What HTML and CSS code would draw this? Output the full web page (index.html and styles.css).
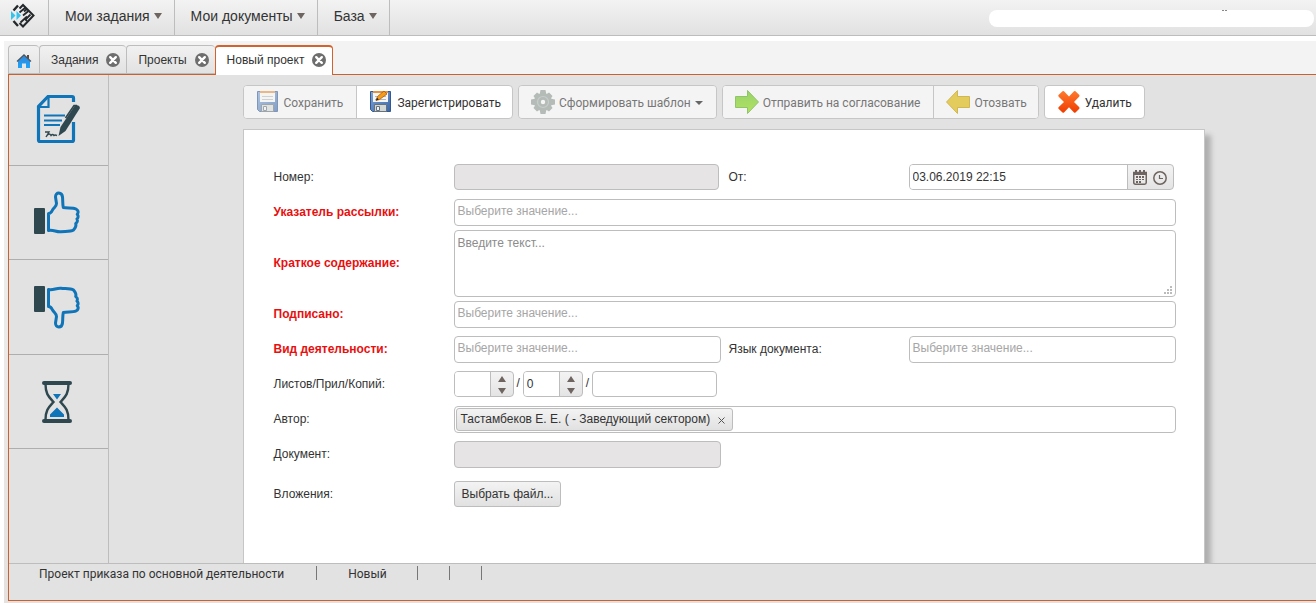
FILE: index.html
```html
<!DOCTYPE html>
<html lang="ru">
<head>
<meta charset="utf-8">
<title>Новый проект</title>
<link rel="stylesheet" href="styles.css">
</head>
<body>
<svg class="defs" aria-hidden="true">
  <defs>
    <linearGradient id="gBlue" x1="0" y1="0" x2="1" y2="1"><stop offset="0" stop-color="#7ea6d6"/><stop offset="1" stop-color="#3a66a8"/></linearGradient>
    <linearGradient id="gRed" x1="0" y1="0" x2="0" y2="1"><stop offset="0" stop-color="#ff7a2e"/><stop offset="1" stop-color="#ee3d00"/></linearGradient>
    <linearGradient id="gGreen" x1="0" y1="0" x2="0" y2="1"><stop offset="0" stop-color="#97d36c"/><stop offset="1" stop-color="#b2e25f"/></linearGradient>
    <linearGradient id="gHome" x1="0" y1="0" x2="0" y2="1"><stop offset="0" stop-color="#2f86dc"/><stop offset="1" stop-color="#1fa4f8"/></linearGradient>
    <symbol id="close" viewBox="0 0 14 14">
      <circle cx="7" cy="7" r="7" fill="#6e6e6e"/>
      <path d="M4.2 4.2l5.6 5.6M9.8 4.2l-5.6 5.6" stroke="#fff" stroke-width="2.4" stroke-linecap="round"/>
    </symbol>
    <symbol id="floppy" viewBox="0 0 24 24">
      <path d="M1.500 1.500h20v20h-18l-2-2z" fill="url(#gBlue)" stroke="#35598f"/>
      <path d="M4 1h15v11H4z" fill="#f5f5f3"/>
      <path d="M4 1h15v2H4z" fill="#e79040"/>
      <path d="M6 6.500h11M6 9.500h11" stroke="#b5b9bd"/>
      <path d="M5.500 14.500h12v7h-12z" fill="#d4d8d4" stroke="#66737e"/>
      <path d="M7.500 16.500h3v4h-3z" fill="#f3f3f3" stroke="#66737e"/>
    </symbol>
    <symbol id="thumb" viewBox="0 0 48 44">
      <path d="M2 18h9v24H2z" fill="#2f474f" stroke="#2f474f" stroke-width="2" stroke-linejoin="round"/>
      <path d="M15.500 39.500V22.500q2.500 0 4-3.500c1.500-2.500 4-3.500 4-6.500L22.500 6c0-5.500 6.500-5 7 0 .4 3.500 0 7 .8 10.500 4 1 9.500-.2 12.700 1.500 2.200 1.200 3 3.500 1.200 5.300 1.600 1.500 1 3.700-.3 4.700 1.200 1.700.2 3.700-1.200 4.500.8 2.300-.4 4.500-2.200 6.500-3 2-9 1.200-12.500 1.800-5 .4-7.500-2.300-12.500-1.300z" fill="none" stroke="#0f75b8" stroke-width="3" stroke-linejoin="round"/>
    </symbol>
  </defs>
</svg>

<header class="topbar">
  <a class="logo" href="#" aria-label="Главная">
    <svg width="26" height="26" viewBox="0 0 26 26">
      <path d="M3.500 7.500L8 2.500M3.500 18l4.500 5" stroke="#24282b" stroke-width="2.400" fill="none"/>
      <path d="M9.500 5.500l3.500-3.500L23.500 12.500 13 23.500l-3.500-3.500" stroke="#24282b" stroke-width="2" fill="none"/>
      <path d="M9.500 9.500l6-5M14 8.500l3-2.500M13 12.500l5.500-4.500M20.500 11.500l-5 5 1.500 1.500M10.500 19.500l6.500-6" stroke="#24282b" stroke-width="1.800" fill="none"/>
      <path d="M1 8l4.500 4.500L1 17zM6.500 8l4.500 4.500-4.500 4.500z" fill="#35c3ec"/>
    </svg>
  </a>
  <nav class="menu">
    <button type="button">Мои задания<i class="arrow"></i></button>
    <button type="button">Мои документы<i class="arrow"></i></button>
    <button type="button">База<i class="arrow"></i></button>
  </nav>
  <div class="user"><i class="dots"></i></div>
</header>

<div class="app">
  <nav class="tabs">
    <a class="tab home" href="#" aria-label="Домой">
      <svg width="16" height="16" viewBox="0 0 16 16"><path d="M11 2h2v4h-2z" fill="#5c4a42"/><path d="M2 8l6-5.500L14 8v7h-4v-4.500H6V15H2z" fill="url(#gHome)"/><path d="M1 8.500l7-6.500 7 6.500" stroke="#4c555e" stroke-width="1.300" fill="none"/></svg>
    </a>
    <div class="tab"><a href="#">Задания</a><button type="button" aria-label="Закрыть"><svg width="14" height="14"><use href="#close"/></svg></button></div>
    <div class="tab"><a href="#">Проекты</a><button type="button" aria-label="Закрыть"><svg width="14" height="14"><use href="#close"/></svg></button></div>
    <div class="tab active"><a href="#">Новый проект</a><button type="button" aria-label="Закрыть"><svg width="14" height="14"><use href="#close"/></svg></button></div>
  </nav>

  <div class="panel">
    <div class="workspace">
      <aside class="sidebar">
        <button type="button" aria-label="Подписать">
          <svg width="48" height="50" viewBox="0 0 48 50">
            <path d="M39.500 8V4q0-1.500-1.500-1.500H14L4.500 12.500V46q0 1.500 1.500 1.500h32q1.500 0 1.500-1.500V28" fill="none" stroke="#0f75b8" stroke-width="3.200"/>
            <path d="M14.500 3v10H4.500" fill="none" stroke="#0f75b8" stroke-width="2.200"/>
            <path d="M10 21.500h21M10 26.500h18M10 31h16" stroke="#0f75b8" stroke-width="2.200"/>
            <path d="M11 38h4l-3 5q3-5 5-1.500 1.500-2 3 0 1-1 3 0" fill="none" stroke="#2f474f" stroke-width="1.400"/>
            <path d="M24.500 42l2-9L40.500 12q5-2 5.500 2L31.500 37z" fill="#2f474f"/>
            <path d="M31.500 24L40 11.500l3 0" fill="none" stroke="#2f474f" stroke-width="1.600"/>
          </svg>
        </button>
        <button type="button" aria-label="Согласовать"><svg width="48" height="44"><use href="#thumb"/></svg></button>
        <button type="button" aria-label="Отклонить"><svg class="flip" width="48" height="44"><use href="#thumb"/></svg></button>
        <button type="button" aria-label="Ожидание">
          <svg width="48" height="44" viewBox="0 0 48 44">
            <path d="M11 3h26M11 41h26" stroke="#2f474f" stroke-width="4" stroke-linecap="round"/>
            <path d="M12.500 4c0 10 3 12.500 8 18-5 5.500-8 8-8 18M35.500 4c0 10-3 12.500-8 18 5 5.500 8 8 8 18" fill="none" stroke="#2f474f" stroke-width="2.400"/>
            <path d="M20 14h8l-4 5.500zM17 37l0-2.500 7-7 7 7V37z" fill="#0f75b8"/>
          </svg>
        </button>
      </aside>

      <main class="main">
        <div class="sheet">
          <div class="toolbar">
            <div class="group">
              <button type="button" disabled><svg width="24" height="24"><use href="#floppy"/></svg>Сохранить</button>
              <button type="button"><svg width="24" height="24" viewBox="0 0 24 24"><use href="#floppy"/><path d="M7 10.500l1.500-4L15 1l3 3-7.500 5.500z" fill="#f59c1a" stroke="#a85c0c" stroke-width=".8"/><path d="M7 10.500l1-2.700 1.800 1.600z" fill="#222"/></svg>Зарегистрировать</button>
            </div>
            <div class="group">
              <button type="button" disabled><svg width="24" height="24" viewBox="0 0 24 24"><g fill="#8a9690"><circle cx="12" cy="12" r="9"/><path d="M9.500 0h5l1 5h-7zM8.500 19h7l-1 5h-5zM0 9.500l5-1v7l-5-1zM24 9.500l-5-1v7l5-1z"/><path d="M9.500 1h5l1 5h-7zM8.500 18h7l-1 5h-5zM1 9.500l5-1v7l-5-1zM23 9.500l-5-1v7l5-1z" transform="rotate(45 12 12)"/></g><circle cx="12" cy="12" r="5.500" fill="none" stroke="#a9b4ae" stroke-width="1.200"/><circle cx="12" cy="12" r="2.200" fill="#f5f5f5"/></svg>Сформировать шаблон<i class="caret"></i></button>
            </div>
            <div class="group">
              <button type="button" disabled><svg class="solid" width="24" height="24" viewBox="0 0 24 24"><path d="M.500 6.500h12v-6L23.500 12 12.500 23.500v-6H.500z" fill="url(#gGreen)" stroke="#8fc46b"/></svg>Отправить на согласование</button>
              <button type="button" disabled><svg class="solid" width="24" height="24" viewBox="0 0 24 24"><path d="M23.500 6.500h-12v-6L.500 12l11 11.500v-6h12z" fill="#e3cb5c" stroke="#d0b752"/></svg>Отозвать</button>
            </div>
            <div class="group">
              <button type="button"><svg width="24" height="24" viewBox="0 0 24 24"><path d="M1.500 5L5.500 1.200q.8-.6 1.500 0L12 6.500l5-5.300q.8-.6 1.500 0L22.300 5q.5.700 0 1.400L17 12l5.300 5.300q.5.700 0 1.400l-3.800 3.700q-.7.600-1.500 0L12 17.200l-5 5.200q-.7.600-1.500 0l-4-3.700q-.5-.7 0-1.400L7 12 1.500 6.400q-.5-.7 0-1.400z" fill="url(#gRed)"/></svg>Удалить</button>
            </div>
          </div>

          <form class="card">
            <div class="row">
              <label for="num">Номер:</label>
              <div class="cell"><input class="field short" id="num" type="text" disabled></div>
              <label for="date">От:</label>
              <div class="cell">
                <div class="date short">
                  <input id="date" type="text" value="03.06.2019 22:15">
                  <button type="button" aria-label="Календарь"><svg width="14" height="15" viewBox="0 0 14 15"><path d="M.750 2.500h12.500v10q0 1.700-1.700 1.700H2.450q-1.700 0-1.700-1.700z" fill="none" stroke="#6e6560" stroke-width="1.500"/><path d="M0 2h14v3H0zM2 0h2v2H2zM6 0h2v2H6zM10 0h2v2h-2z" fill="#6e6560"/><path d="M3 6h2v2H3zM6 6h2v2H6zM9 6h2v2H9zM3 9h2v1H3zM6 9h2v1H6zM9 9h2v1H9zM3 11h2v2H3zM6 11h2v2H6z" fill="#6e6560"/></svg></button>
                  <button type="button" aria-label="Время"><svg width="14" height="14" viewBox="0 0 14 14"><circle cx="7" cy="7" r="6.200" fill="none" stroke="#6e6560" stroke-width="1.500"/><path d="M6.500 4v3.500H10" fill="none" stroke="#6e6560" stroke-width="1.200"/></svg></button>
                </div>
              </div>
            </div>
            <div class="row tight wide">
              <label class="req" for="dist">Указатель рассылки:</label>
              <input class="field pick" id="dist" type="text" placeholder="Выберите значение...">
            </div>
            <div class="row tall wide">
              <label class="req" for="sum">Краткое содержание:</label>
              <div class="area">
                <textarea class="field" id="sum" placeholder="Введите текст..."></textarea>
                <svg class="grip" width="8" height="8" viewBox="0 0 8 8"><path d="M6 0h2v2H6zM3 3h2v2H3zM6 3h2v2H6zM0 6h2v2H0zM3 6h2v2H3zM6 6h2v2H6z" fill="#bbb"/></svg>
              </div>
            </div>
            <div class="row wide">
              <label class="req" for="sign">Подписано:</label>
              <input class="field pick" id="sign" type="text" placeholder="Выберите значение...">
            </div>
            <div class="row">
              <label class="req" for="kind">Вид деятельности:</label>
              <input class="field pick" id="kind" type="text" placeholder="Выберите значение...">
              <label for="lang">Язык документа:</label>
              <input class="field pick" id="lang" type="text" placeholder="Выберите значение...">
            </div>
            <div class="row wide">
              <label for="pages">Листов/Прил/Копий:</label>
              <div class="counts">
                <div class="spinner"><input id="pages" type="text"><div class="steps"><button type="button" aria-label="Больше"><i class="up"></i></button><button type="button" aria-label="Меньше"><i class="down"></i></button></div></div>
                <span>/</span>
                <div class="spinner"><input type="text" value="0" aria-label="Приложений"><div class="steps"><button type="button" aria-label="Больше"><i class="up"></i></button><button type="button" aria-label="Меньше"><i class="down"></i></button></div></div>
                <span>/</span>
                <input class="field copies" type="text" aria-label="Копий">
              </div>
            </div>
            <div class="row wide">
              <label for="author">Автор:</label>
              <div class="field tags">
                <span class="tag">Тастамбеков Е. Е. ( - Заведующий сектором)<button type="button" aria-label="Убрать"><svg width="7" height="7" viewBox="0 0 7 7"><path d="M.500.500l6 6M6.500.500l-6 6" stroke="#555"/></svg></button></span>
                <input id="author" type="text">
              </div>
            </div>
            <div class="row last">
              <label for="doc">Документ:</label>
              <input class="field" id="doc" type="text" disabled>
            </div>
            <div class="row wide">
              <label for="file">Вложения:</label>
              <div><button class="file" id="file" type="button">Выбрать файл...</button></div>
            </div>
          </form>
        </div>
      </main>
    </div>

    <footer class="status">
      <span>Проект приказа по основной деятельности</span>
      <span>Новый</span>
      <span class="empty"></span>
      <span class="empty"></span>
    </footer>
  </div>
</div>
</body>
</html>
```
FILE: styles.css
```css
* { box-sizing: border-box; }

body {
  margin: 0;
  height: 100vh;
  display: flex;
  flex-direction: column;
  overflow: hidden;
  background: #fff;
  color: #333;
  font: 12px/16px "Liberation Sans", Arial, sans-serif;
}

button, input, textarea { font: inherit; color: inherit; margin: 0; }
button { border: 0; padding: 0; background: none; }
a { color: inherit; text-decoration: none; }
svg { display: block; flex: none; }
.defs { position: absolute; width: 0; height: 0; }

/* Top bar */
.topbar {
  display: flex;
  align-items: stretch;
  flex: none;
  height: 36px;
  border-bottom: 1px solid #bdbdbd;
  background: linear-gradient(#f3f3f3, #e1e1e1);
}
.logo {
  display: flex;
  justify-content: center;
  width: 49px;
  padding: 3px 2px 0 0;
  border-right: 1px solid #bdbdbd;
}
.menu { display: flex; }
.menu button {
  display: flex;
  align-items: center;
  gap: 4px;
  padding: 0 12px 3px 16px;
  border-right: 1px solid #bdbdbd;
  font-size: 14px;
}
.arrow {
  border: 4px solid transparent;
  border-top: 6px solid #6e6560;
  border-bottom: 0;
}
.user {
  width: 325px;
  height: 17px;
  margin: 10px 2px 0 auto;
  border-radius: 8px;
  background: #fff;
}
.dots {
  display: block;
  width: 5px;
  height: 1px;
  margin-left: 233px;
  border: solid #888;
  border-width: 0 2px;
}

/* Tabs */
.app {
  flex: 1;
  min-height: 0;
  display: flex;
  flex-direction: column;
  margin: 5px 0 0 4px;
  padding: 4px 0 2px 4px;
  background: linear-gradient(#f3f3f3, #f3f3f3 40px, #e6e1de);
}
.tabs { display: flex; flex: none; height: 30px; margin-bottom: -1px; }
.tab {
  display: flex;
  align-items: center;
  gap: 8px;
  height: 29px;
  padding: 0 6px 0 11px;
  border: 1px solid #bdbdbd;
  border-right: 0;
  border-radius: 4px 4px 0 0;
  background: linear-gradient(#f1f1f1, #e2e2e2);
}
.home { width: 31px; padding: 3px 0 0 7px; }
.tab.active {
  position: relative;
  height: 30px;
  padding: 0 6px 2px 11px;
  border: 1px solid #d3622c;
  border-top-width: 2px;
  border-bottom: 0;
  background: #fff;
}

/* Panel */
.panel {
  flex: 1;
  min-height: 0;
  display: flex;
  flex-direction: column;
  border: 1px solid #c9602f;
  border-right: 0;
  background: #e2e2e2;
}
.workspace { flex: 1; min-height: 0; display: flex; }
.sidebar { width: 100px; flex: none; border-right: 1px solid #bdbdbd; }
.sidebar button {
  display: flex;
  align-items: center;
  justify-content: center;
  width: 100%;
  height: 94px;
  padding-right: 4px;
  border-bottom: 1px solid #aeaeae;
}
.sidebar button:first-child { height: 91px; padding: 0 2px 2px 0; }
.sidebar button:nth-child(3) { height: 95px; }
.flip { transform: scaleY(-1); }

.main { flex: 1; min-width: 0; padding: 10px 0 0 22px; overflow: hidden; }
.sheet { max-width: 962px; margin: 0 auto; height: 100%; display: flex; flex-direction: column; }

/* Toolbar */
.toolbar { display: flex; gap: 5px; flex: none; margin-bottom: 10px; white-space: nowrap; }
.group { display: flex; border: 1px solid #c6c6c6; border-radius: 4px; background: #fff; overflow: hidden; }
.group button {
  display: flex;
  align-items: center;
  gap: 4px;
  height: 32px;
  padding: 2px 12px 0;
  font-family: Roboto, sans-serif;
}
.group svg { margin-bottom: 2px; }
.group button:disabled { padding-right: 13px; background: #f4f4f4; color: #777; }
.group button + button,
.group button + button:disabled { padding: 2px 11px 0 12px; border-left: 1px solid #c6c6c6; }
.group button:disabled svg { opacity: .6; }
.group button:disabled svg.solid { opacity: 1; }
.caret { border: 4px solid transparent; border-top-color: #666; border-bottom: 0; }

/* Form */
.card {
  flex: 1 0 auto;
  padding: 34px 28px 56px 30px;
  border: 1px solid #c6c6c6;
  background: #fff;
  box-shadow: 6px 6px 5px #b0b0b0;
}
.row {
  display: grid;
  grid-template-columns: 180px 1fr 8px 180px 1fr;
  align-items: start;
  min-height: 35px;
}
.row > label { line-height: 26px; }
.row > label:nth-of-type(2) { grid-column: 4; }
.row.wide { grid-template-columns: 180px 1fr; }
.row.tight { min-height: 31px; }
.row.tall { min-height: 71px; }
.row.tall > label { line-height: 66px; }
.row.last { min-height: 40px; }
.req { color: #e8100f; font-weight: bold; }

.field {
  display: block;
  width: 100%;
  height: 27px;
  padding: 0 3px;
  border: 1px solid #bdbdbd;
  border-radius: 4px;
  background: #fff;
}
.field:disabled { background: #e6e4e5; }
.pick { padding-bottom: 3px; }
.cell { padding-right: 2px; }
.short { height: 26px; }
::placeholder { color: #a6a6a6; opacity: 1; }
.area { position: relative; }
textarea.field { height: 67px; padding: 4px 3px; resize: none; }
textarea::placeholder { color: #8c8c8c; }
.grip { position: absolute; right: 4px; bottom: 3px; }

.date, .spinner {
  display: flex;
  overflow: hidden;
  border: 1px solid #bdbdbd;
  border-radius: 4px;
  background: linear-gradient(#f3f3f3, #e4e4e4);
}
.date input, .spinner input {
  flex: 1;
  width: 0;
  min-width: 0;
  padding: 0 3px;
  border: 0;
  border-right: 1px solid #bdbdbd;
  background: #fff;
}
.date button { width: 20px; display: flex; justify-content: center; align-items: center; }
.date button:first-of-type { margin-left: 2px; }
.date button:last-of-type { width: 23px; padding: 2px 3px 0 0; }

.counts { display: flex; gap: 3px; }
.counts span { line-height: 24px; }
.spinner { width: 60px; height: 26px; }
.steps { width: 22px; display: flex; flex-direction: column; }
.steps button { flex: 1; display: flex; justify-content: center; align-items: center; padding-top: 2px; }
.up, .down { border: 4px solid transparent; }
.up { border-top: 0; border-bottom: 6px solid #6e6560; }
.down { border-bottom: 0; border-top: 6px solid #6e6560; }
.copies { width: 125px; height: 26px; }

.tags { display: flex; padding: 1px; }
.tags input { flex: 1; min-width: 0; border: 0; background: none; }
.tag {
  display: flex;
  align-items: center;
  gap: 8px;
  height: 23px;
  padding: 0 7px 1px 4px;
  border: 1px solid #bdbdbd;
  border-radius: 3px;
  background: linear-gradient(#f3f3f3, #e1e1e1);
  white-space: nowrap;
}
.tag button { padding-top: 2px; }
.file {
  height: 26px;
  padding: 0 7px;
  border: 1px solid #bdbdbd;
  border-radius: 3px;
  background: linear-gradient(#f3f3f3, #e1e1e1);
}

/* Status bar */
.status {
  position: relative;
  display: flex;
  flex: none;
  height: 37px;
  padding-top: 2px;
  border-top: 1px solid #bdbdbd;
  background: #e2e2e2;
  font-family: Roboto, sans-serif;
}
.status span { height: 14px; padding: 0 30px 0 31px; border-right: 1px solid #777; }
.status span:first-child { padding: 0 32px 0 30px; }
.status .empty { width: 32px; padding: 0; }
```
